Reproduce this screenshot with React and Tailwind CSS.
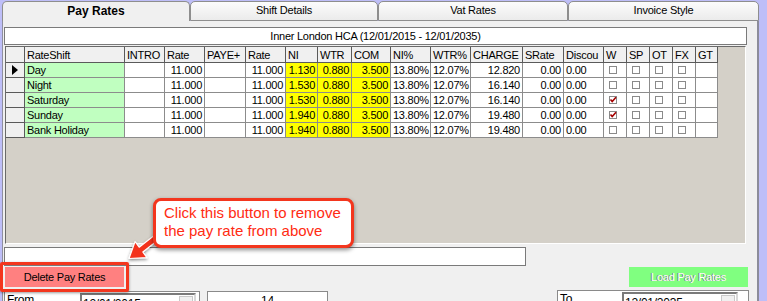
import React from 'react';

const Y = 'bg-[#ffff00]';
const cols = [
  { h: 'RateShift', w: 'w-[100px]', a: 'text-left', bg: 'bg-[#c0ffc0]', k: 'name' },
  { h: 'INTRO', w: 'w-[40px]', a: 'text-right', k: 'intro' },
  { h: 'Rate', w: 'w-[40px]', a: 'text-right', k: 'rate' },
  { h: 'PAYE+', w: 'w-[41px]', a: 'text-right', k: 'paye' },
  { h: 'Rate', w: 'w-[40px]', a: 'text-right', k: 'rate2' },
  { h: 'NI', w: 'w-[32px]', a: 'text-right', bg: Y, k: 'ni' },
  { h: 'WTR', w: 'w-[34px]', a: 'text-right', bg: Y, k: 'wtr' },
  { h: 'COM', w: 'w-[39px]', a: 'text-right', bg: Y, k: 'com' },
  { h: 'NI%', w: 'w-[40px]', a: 'text-left', k: 'nip' },
  { h: 'WTR%', w: 'w-[40px]', a: 'text-left', k: 'wtrp' },
  { h: 'CHARGE', w: 'w-[52px]', a: 'text-right', k: 'charge' },
  { h: 'SRate', w: 'w-[41px]', a: 'text-right', k: 'srate' },
  { h: 'Discou', w: 'w-[40px]', a: 'text-left', k: 'disc' },
  { h: 'W', w: 'w-[23px]', cb: 'W' },
  { h: 'SP', w: 'w-[23px]', cb: 'SP' },
  { h: 'OT', w: 'w-[23px]', cb: 'OT' },
  { h: 'FX', w: 'w-[23px]', cb: 'FX' },
  { h: 'GT', w: 'w-[22px]', k: 'gt' },
];

const base = { intro: '', rate: '11.000', paye: '', rate2: '11.000', wtr: '0.880', com: '3.500', nip: '13.80%', wtrp: '12.07%', srate: '0.00', disc: '0.00', gt: '' };
const rows = [
  { ...base, name: 'Day', ni: '1.130', charge: '12.820', sel: true },
  { ...base, name: 'Night', ni: '1.530', charge: '16.140' },
  { ...base, name: 'Saturday', ni: '1.530', charge: '16.140', W: true },
  { ...base, name: 'Sunday', ni: '1.940', charge: '19.480', W: true },
  { ...base, name: 'Bank Holiday', ni: '1.940', charge: '19.480' },
];

function Check({ on }) {
  return (
    <span className="block ml-[3px] mt-[3px] w-[8px] h-[8px] border border-[#8a8a8a] bg-white relative">
      {on && (
        <svg width="8" height="8" viewBox="0 0 8 8" className="absolute left-[-1px] top-[-1px]">
          <path d="M1.5 3.5 L3.2 5.6 L7 1.2" stroke="#a50000" strokeWidth="1.6" fill="none" />
        </svg>
      )}
    </span>
  );
}

function Tab({ label, w, active }) {
  return (
    <div
      className={
        'h-[20px] ' + w + ' border border-[#8e8e8e] rounded-t-[5px] flex items-center justify-center pb-[1px] ' +
        (active ? 'border-b-0 bg-[#f0f0f0] font-bold text-[12px]' : 'bg-gradient-to-b from-[#fcfcfc] to-[#ebebeb] text-[11px] tracking-[-0.2px]')
      }
    >
      {label}
    </div>
  );
}

function DateBox({ text }) {
  return (
    <div className="w-[116px] h-[20px] border-2 border-t-[#7a7a7a] border-l-[#7a7a7a] border-r-[#d8d8d8] border-b-[#d8d8d8] bg-white flex">
      <span className="text-[12px] leading-[16px] pl-[1px] pt-[1px] flex-1">{text}</span>
      <span className="w-[14px] h-[14px] mt-[1px] mr-[1px] bg-[#f0f0f0] border border-[#c8c8c8]" />
    </div>
  );
}

export default function App() {
  return (
    <div className="relative w-[767px] h-[301px] overflow-hidden bg-[#bebef8] font-['Liberation_Sans',Arial,sans-serif] text-[11px] text-black">
      <div className="pl-[2px] pt-[1px]">
        <div className="flex">
          <Tab label="Pay Rates" w="w-[188px]" active />
          <Tab label="Shift Details" w="w-[188px]" />
          <Tab label="Vat Rates" w="w-[190px]" />
          <Tab label="Invoice Style" w="w-[191px]" />
        </div>
        <div className="w-[757px] h-[280px] bg-[#f0f0f0] border-l border-l-[#8f8f9f] border-r-2 border-r-[#8c8c9a] pt-[6px] tracking-[-0.25px]">
          <div className="ml-[1px] w-[743px] h-[18px] bg-white border border-[#7a7a7a] text-center leading-[16px]">
            Inner London HCA (12/01/2015 - 12/01/2035)
          </div>
          <div className="ml-[2px] mt-[1px] w-[741px] h-[198px] bg-[#d4d0c8] border-t border-l border-t-[#6a6a6a] border-l-[#6a6a6a] border-r border-b border-r-white border-b-white">
            <div className="flex">
              <div className="w-[19px] h-[16px] bg-[#f0f0f0] border-r border-b border-[#5a5a5a]" />
              {cols.map((c, i) => (
                <div key={i} className={c.w + ' h-[16px] bg-[#f0f0f0] border-r border-b border-[#5a5a5a] leading-[16px] pl-[2px] whitespace-nowrap overflow-hidden'}>
                  {c.h}
                </div>
              ))}
            </div>
            {rows.map((r, ri) => (
              <div key={ri} className="flex">
                <div className="w-[19px] h-[15px] bg-[#f0f0f0] border-r border-b border-[#5a5a5a] flex items-center justify-center">
                  {r.sel && (
                    <svg width="6" height="10" viewBox="0 0 6 10">
                      <path d="M0 0 L6 5 L0 10 Z" fill="#000" />
                    </svg>
                  )}
                </div>
                {cols.map((c, i) => (
                  <div
                    key={i}
                    className={
                      c.w + ' h-[15px] border-r border-b border-[#8c8c8c] leading-[14px] px-[2px] whitespace-nowrap overflow-hidden ' +
                      (c.bg || 'bg-white') + ' ' + (c.a || '')
                    }
                  >
                    {c.cb ? <Check on={!!r[c.cb]} /> : r[c.k]}
                  </div>
                ))}
              </div>
            ))}
          </div>
          <div className="ml-[1px] mt-[3px] w-[522px] h-[19px] bg-white border border-[#7a7a7a]" />
          <div className="flex mt-[1px]">
            <div className="ml-[2px] w-[119px] h-[20px] bg-[#ff8080] text-center leading-[20px]">Delete Pay Rates</div>
            <div className="ml-auto mr-[9px] w-[119px] h-[20px] bg-[#80ff80] text-center leading-[20px] text-white [text-shadow:-1px_0_0_#7a7a7a]">
              Load Pay Rates
            </div>
          </div>
          <div className="flex mt-[3px]">
            <div className="ml-[1px] mt-[1px] w-[196px] h-[30px] bg-white border border-[#8a8a8a] flex">
              <span className="text-[12px] leading-[14px] pl-[2px] pt-[1px] w-[75px]">From</span>
              <div className="mt-[1px]">
                <DateBox text="12/01/2015" />
              </div>
            </div>
            <div className="ml-[7px] mt-[1px] w-[121px] h-[30px] bg-white border border-[#8a8a8a] text-center text-[12px] leading-[14px] pt-[2px]">14</div>
            <div className="ml-auto mr-[8px] w-[192px] h-[30px] bg-white border border-[#8a8a8a] flex">
              <span className="text-[12px] leading-[14px] pl-[2px] pt-[1px] w-[64px]">To</span>
              <div className="mt-[1px]">
                <DateBox text="12/01/2035" />
              </div>
            </div>
          </div>
        </div>
      </div>

      {/* annotation arrow */}
      <svg className="absolute left-0 top-0 pointer-events-none" width="767" height="301" viewBox="0 0 767 301">
        <defs>
          <filter id="sh" x="-20%" y="-20%" width="140%" height="140%">
            <feDropShadow dx="0" dy="1.5" stdDeviation="1.5" floodColor="#000" floodOpacity="0.45" />
          </filter>
        </defs>
        <polygon
          points="129,258.5 146.9,257.6 142.8,252 167.8,232.4 164.2,227.6 139.2,247.2 135.1,241.6"
          fill="#f3331c"
          stroke="#ffffff"
          strokeWidth="1.2"
          strokeLinejoin="round"
          filter="url(#sh)"
        />
      </svg>

      {/* callout */}
      <div className="absolute left-[153px] top-[198px] w-[201px] h-[50px] bg-white border-[3px] border-[#f3361e] rounded-[8px] shadow-[0_2px_4px_rgba(0,0,0,0.45)] pl-[8px] pt-[3px] text-[15px] leading-[18px] text-[#ff2b12] tracking-normal whitespace-nowrap">
        <div>Click this button to remove</div>
        <div>the pay rate from above</div>
      </div>

      {/* highlight around delete */}
      <div className="absolute left-0 top-[262px] w-[129px] h-[30px] border-[3px] border-[#f3361e] rounded-[2px] shadow-[0_1px_3px_rgba(0,0,0,0.4)] pointer-events-none" />
    </div>
  );
}
